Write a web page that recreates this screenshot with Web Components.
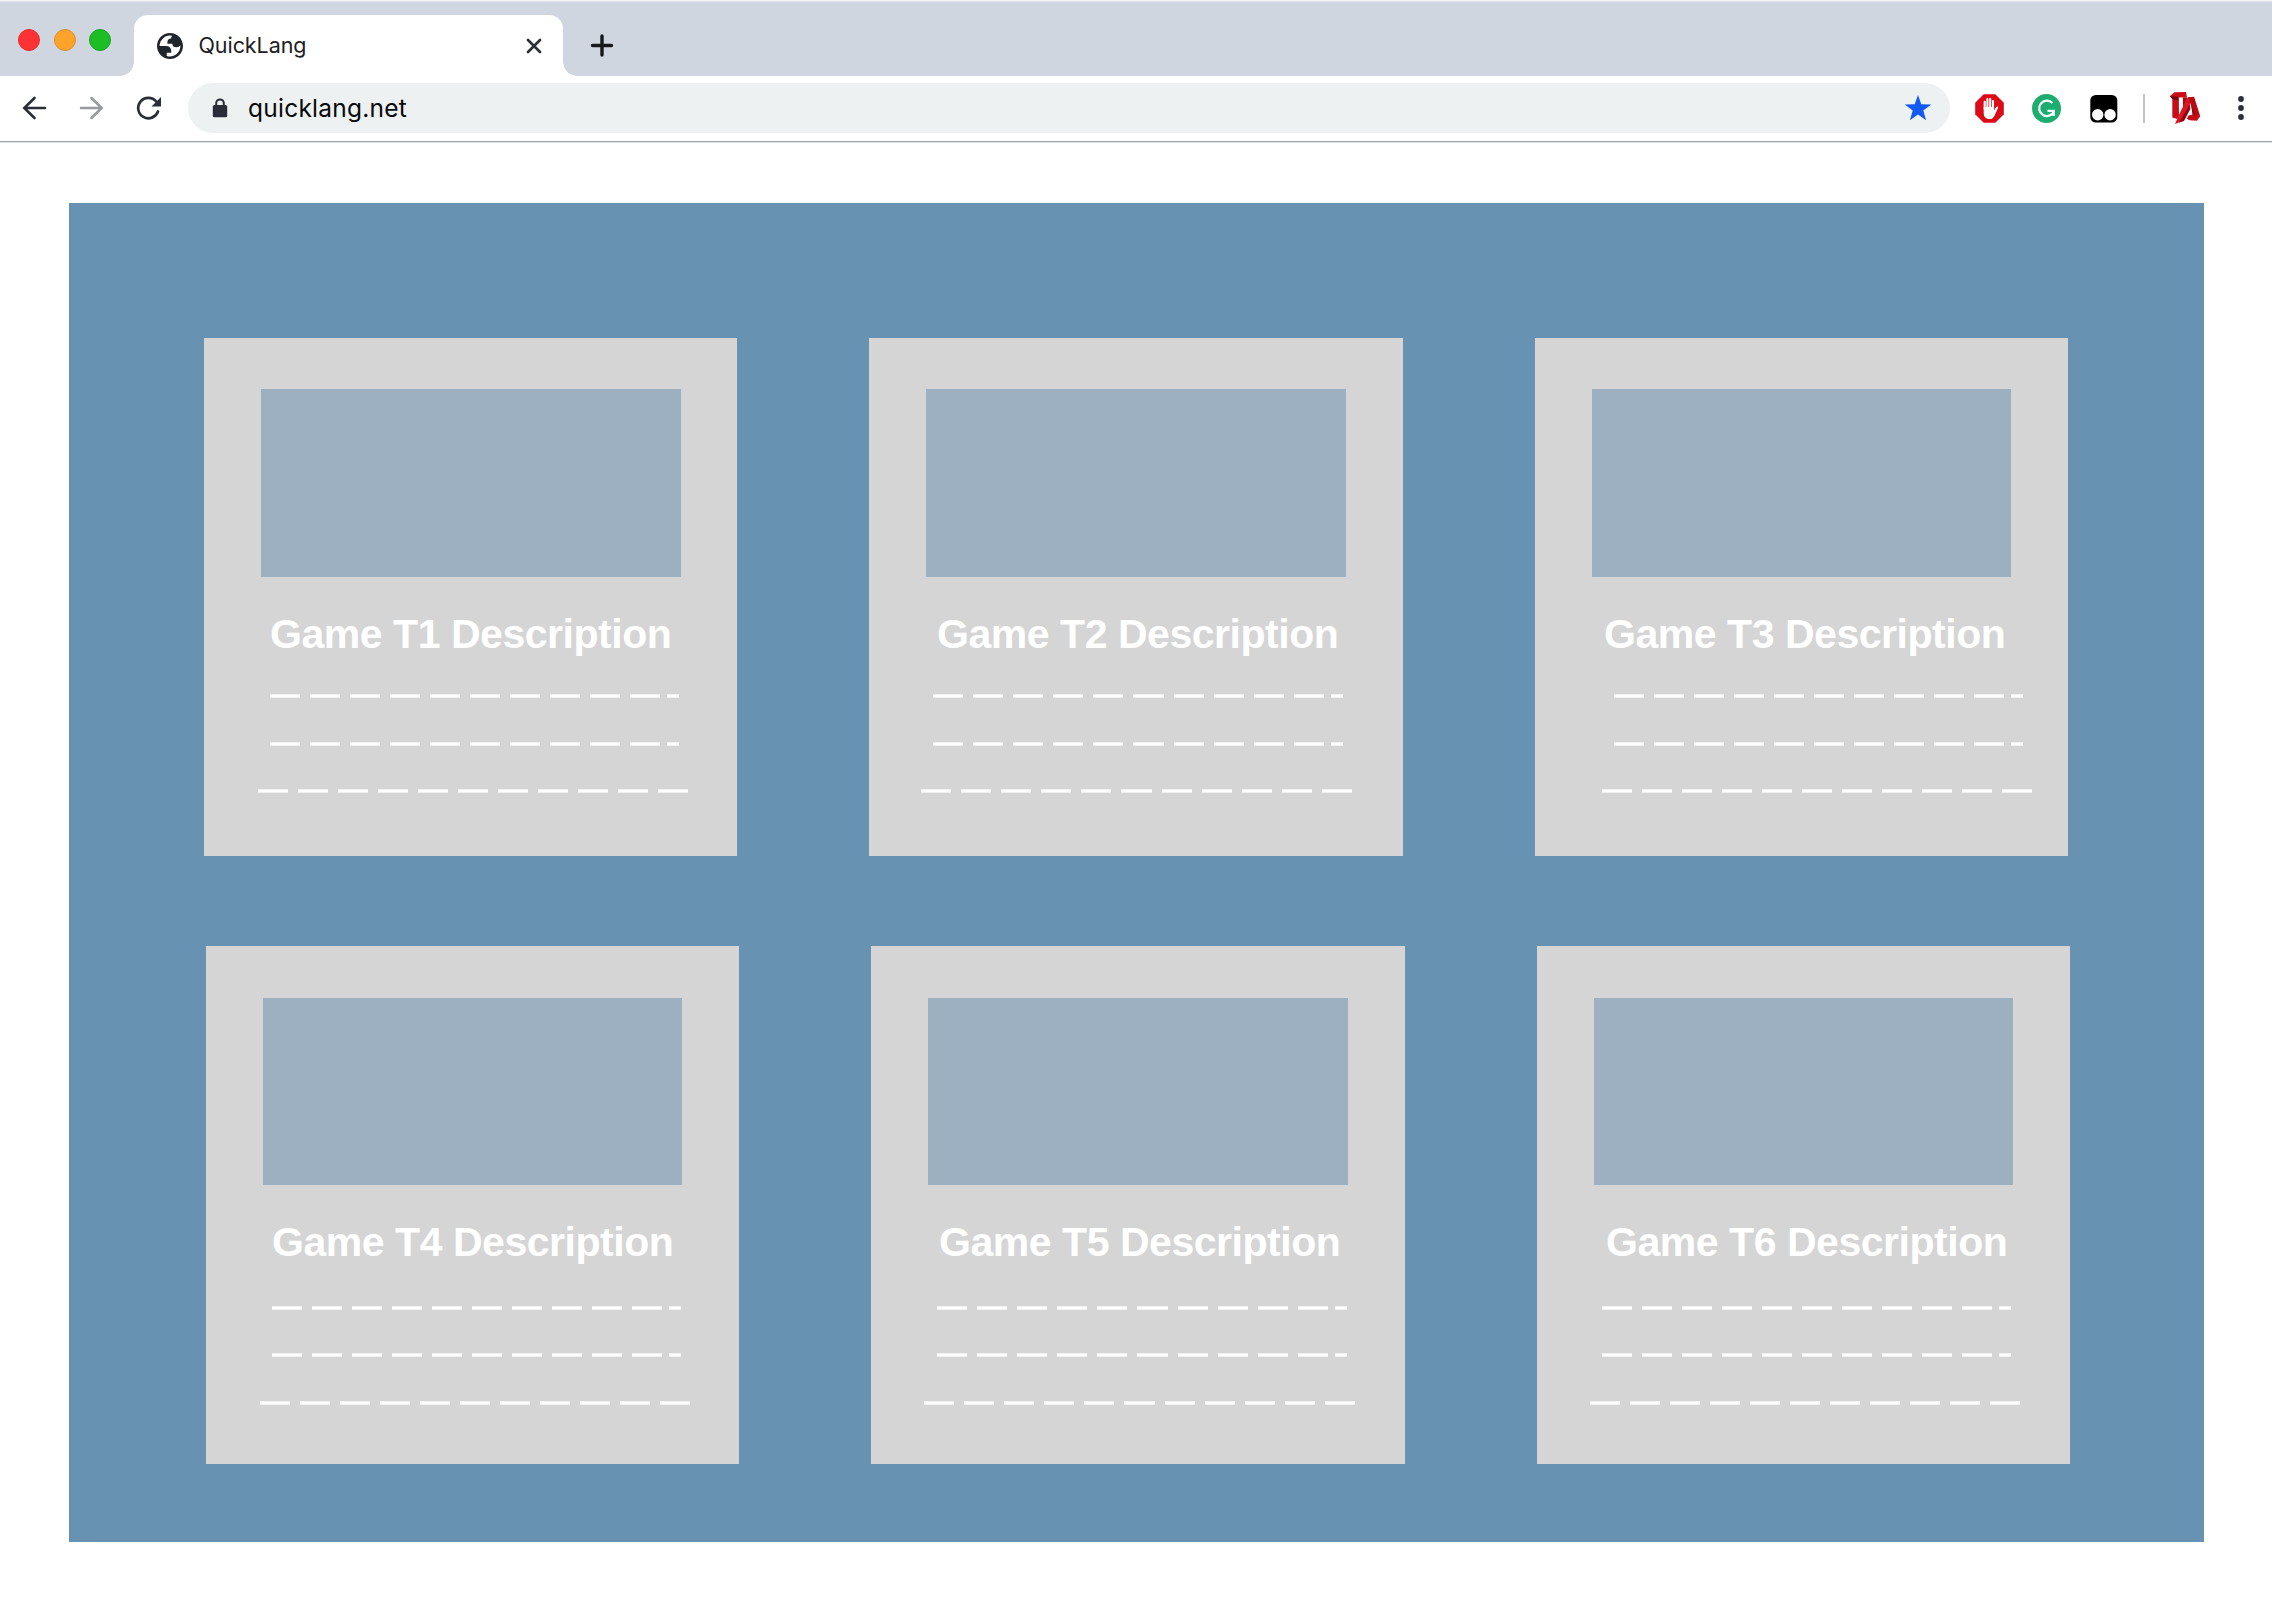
<!DOCTYPE html>
<html lang="en">
<head>
<meta charset="utf-8">
<title>QuickLang</title>
<style>
html,body{margin:0;padding:0;background:#fff}
body{width:2272px;height:1600px;overflow:hidden;font-family:"Liberation Sans",sans-serif}
</style>
</head>
<body>
<browser-window>
  <tab-strip slot="tabs"><browser-tab>QuickLang</browser-tab></tab-strip>
  <nav-bar slot="nav">quicklang.net</nav-bar>
  <game-board>
    <game-card shot="420" head="66" line="66" last="54">Game T1 Description</game-card>
    <game-card wide shot="420" head="68" line="64" last="52">Game T2 Description</game-card>
    <game-card shot="419" head="69" line="79" last="67">Game T3 Description</game-card>
    <game-card low shot="419" head="66" line="66" last="54">Game T4 Description</game-card>
    <game-card low wide shot="420" head="68" line="66" last="53">Game T5 Description</game-card>
    <game-card low shot="419" head="69" line="65" last="53">Game T6 Description</game-card>
  </game-board>
</browser-window>
<script>
const define = (name, render) => customElements.define(name, class extends HTMLElement {
  constructor() { super(); this.attachShadow({ mode: 'open' }); }
  connectedCallback() { this.shadowRoot.innerHTML = render(this); }
});

define('browser-window', () => `
<style>
:host{display:flex;flex-direction:column;width:2272px;height:1600px;background:#fff}
main{padding:59px 0 0 69px}
</style>
<slot name="tabs"></slot><slot name="nav"></slot><main><slot></slot></main>`);

define('tab-strip', () => `
<style>
:host{display:flex;box-sizing:border-box;height:76px;padding-left:18px;background:linear-gradient(#f3f4f6 0,#f3f4f6 1px,#dfe3ea 1px,#dfe3ea 2px,#d0d6e0 2px)}
.lights{display:flex;gap:13.7px;padding-top:28.5px;width:102px}
i{box-sizing:border-box;width:22px;height:22px;border-radius:50%;border:1px solid}
.r{background:#fe3232;border-color:#e52a2b}.y{background:#fea32a;border-color:#dd8e26}.g{background:#1dbd26;border-color:#18a31f}
svg{display:block;margin-top:34px;margin-left:13px}
</style>
<div class="lights"><i class="r"></i><i class="y"></i><i class="g"></i></div>
<slot></slot>
<svg width="24" height="24" viewBox="0 0 24 24"><path d="M12 2.5v19M2.5 12h19" transform="translate(0 -.5)" stroke="#15181c" stroke-width="3.4" stroke-linecap="round"/></svg>`);

define('browser-tab', () => `
<style>
:host{display:flex;height:76px;width:457px}
.foot{flex:none;width:14px;height:14px;align-self:flex-end}
.l{background:radial-gradient(circle at 0 0,transparent 13.5px,#fff 14px)}
.r{background:radial-gradient(circle at 100% 0,transparent 13.5px,#fff 14px)}
.tab{display:flex;align-items:center;box-sizing:border-box;width:429px;height:61px;margin-top:15px;padding:0 21px 0 23px;background:#fff;border-radius:14px 14px 0 0}
.title{flex:1;margin-left:15.5px;padding-bottom:2px;font:21.5px/30px Inter,sans-serif;letter-spacing:-.07px;color:#1d2024}
svg{display:block;flex:none}
</style>
<div class="foot l"></div>
<div class="tab">
<svg width="26" height="26" viewBox="2 2 20 20"><path fill="#20242b" fill-rule="evenodd" d="M12 2C6.480 2 2 6.480 2 12s4.480 10 10 10 10-4.480 10-10S17.520 2 12 2zM4 12h4.400c3.407.022 4.922 1.730 4.543 5.127H9.488v2.470a8.004 8.004 0 0 0 10.498-8.083C19.327 12.504 18.332 13 17 13c-2.137 0-3.206-.916-3.206-2.750h-3.748c-.274-2.728.683-4.092 2.870-4.092 0-.975.327-1.597.811-1.970A8.004 8.004 0 0 0 4 12z"/></svg>
<span class="title"><slot></slot></span>
<svg width="16" height="16" viewBox="0 0 16 16"><path d="M2 2l12 12M14 2L2 14" stroke="#2d3136" stroke-width="2.7" stroke-linecap="round"/></svg>
</div>
<div class="foot r"></div>`);

define('nav-bar', () => `
<style>
:host{display:flex;box-sizing:border-box;height:68px;padding:7px 0 8px 20px;background:linear-gradient(#fff 65px,#a5a6ae 65px,#a5a6ae 66px,#dcdde6 66px,#dcdde6 67px,#fff 67px)}
svg{display:block;flex:none}
.nav{display:flex;align-items:center;gap:25px;width:168px;height:50px}
.omni{display:flex;align-items:center;box-sizing:border-box;width:1762px;height:50px;padding:0 18px 0 24px;border-radius:25px;background:#eef1f2}
.url{flex:1;margin-left:20px;font:24.500px/34px Inter,sans-serif;letter-spacing:.24px;color:#08090a}
.ext{display:flex;align-items:center;height:50px;margin-left:23px}
.ext svg{margin-right:26px}
.sep{width:2px;height:29px;background:#c3c3c5}
.ext .ta{margin:0 0 0 24px}.ext .dots{margin:0 0 0 36px}
</style>
<div class="nav">
<svg width="32" height="32" viewBox="0 0 32 32" fill="none" stroke="#2a2e36" stroke-width="2.600" stroke-linecap="round"><path d="M25 16H5M14.500 6L4.300 16l10.200 10"/></svg>
<svg width="32" height="32" viewBox="0 0 32 32" fill="none" stroke="#96999e" stroke-width="2.500" stroke-linecap="round"><path d="M4 16h20M14.500 6l10.200 10-10.200 10"/></svg>
<svg width="32" height="32" viewBox="0 0 32 32"><path d="M24 19.500A10.200 10.200 0 1 1 22.200 9.500" fill="none" stroke="#2a2e36" stroke-width="2.700" stroke-linecap="round"/><path d="M27 5v9.500h-9.500z" fill="#2a2e36"/></svg>
</div>
<div class="omni">
<svg width="16" height="20" viewBox="0 0 16 20"><path d="M4.200 9V5.200a3.800 3.800 0 0 1 7.600 0V9" fill="none" stroke="#2a2d38" stroke-width="2"/><rect x=".8" y="7" width="14.400" height="12.300" rx="1.500" fill="#2a2d38"/></svg>
<span class="url"><slot></slot></span>
<svg width="28" height="28" viewBox="0 0 28 28"><path fill="#1259f6" d="M14 1l3.300 9.300 9.900.3-7.900 5.900 2.800 9.700-8.100-5.700-8.100 5.700 2.800-9.700-7.900-5.900 9.900-.3z"/></svg>
</div>
<div class="ext">
<svg style="margin-left:2px" width="29" height="29" viewBox="0 0 29 29"><path fill="#db0a16" d="M8.700.2h11.600l8.500 8.500v11.600l-8.500 8.500H8.700L.2 20.300V8.700z"/><path fill="none" stroke="#fff" stroke-width="2.100" stroke-linecap="round" d="M9.700 15V7.800M12.400 14V5M15.200 14V5M18 15V7"/><path fill="#fff" d="M8.700 13h10.400v3.500l2-3.300c.9-1.100 2.400-.6 1.900.7l-3.400 7.500c-1 2.400-2.700 3.700-5.200 3.700-3.700 0-5.700-2.300-5.700-6z"/></svg>
<svg width="29" height="29" style="margin-left:2px" viewBox="0 0 29 29"><circle cx="14.500" cy="14.500" r="14.500" fill="#1ead70"/><path fill="none" stroke="#fff" stroke-width="2.300" d="M20.400 9A7.700 7.700 0 1 0 22 17.400M15.500 16.900h6.200v5"/></svg>
<svg width="29" height="29" style="margin-left:2px;margin-right:25px" viewBox="0 0 29 29"><rect x="1.300" y="1" width="27" height="27.500" rx="5.500" fill="#000"/><circle cx="8.700" cy="20.800" r="5.700" fill="#fff"/><circle cx="21.100" cy="20.800" r="5.700" fill="#fff"/></svg>
<span class="sep"></span>
<svg class="ta" width="32" height="34" viewBox="0 0 32 34"><path fill="#c70d18" d="M.8 5.200L5.500 1.200 17 1l1 5.500H9.800L10 24.500 8.500 28 3.300 26.500V7.500z"/><path fill="#6e080c" d="M.8 5.200l8 .6.800 3.700-6.300-1.600z"/><path fill="#a20a12" d="M13.800 6.500h4.400v5.300l-4 7z"/><path fill="#dc1521" d="M18 7l3.500 1-.8 7.500-8 15-6.700 2.500 2.500-6z"/><path fill="#8a0810" d="M20.700 13.500l.6 4.500-6.300 12-5 1.500z"/><path fill="#b50c15" d="M18.300 6.300l6.800-.6 6.100 19.600-6-1.800-5-14z"/><path fill="#8f0810" d="M22 13.500l4 10 5.200 1.800-1.500 1.800-6.200-3z"/><path fill="#c4101b" d="M19.500 24.500l4.500-1 7 1.800-3 4.500-7.500-.6-2.700-1.500z"/></svg>
<svg class="dots" width="8" height="26" viewBox="0 0 8 26"><g fill="#2d3037"><circle cx="4" cy="4" r="2.900"/><circle cx="4" cy="13" r="2.900"/><circle cx="4" cy="22" r="2.900"/></g></svg>
</div>`);

define('game-board', () => `
<style>
:host{display:grid;box-sizing:border-box;width:2135px;height:1339px;padding:135px 0 0 135px;grid-template-columns:533px 534px 533px;grid-template-rows:518px 518px;column-gap:132px;row-gap:90px;background:#6792b1}
</style><slot></slot>`);

define('game-card', el => {
  const low = el.hasAttribute('low'), wide = el.hasAttribute('wide') ? ' wide' : '';
  const gaps = low ? [39, 43, 44] : [35, 44, 43];
  const at = n => el.getAttribute(n);
  return `
<style>
:host{display:flex;flex-direction:column;box-sizing:border-box;height:518px;padding-top:${low ? 52 : 51}px;background:#d5d5d5}
:host([low]){margin-left:2px;margin-right:-2px}
.shot{width:${at('shot')}px;height:${low ? 187 : 188}px;margin-left:57px;background:#9cb0c1}
h2{margin:32px 0 0 ${at('head')}px;font:bold 41px/50px "Liberation Sans",sans-serif;letter-spacing:-.46px;color:#fff;white-space:nowrap}
</style>
<div class="shot"></div>
<h2><slot></slot></h2>
<dash-rule tail${wide} style="margin:${gaps[0]}px 0 0 ${at('line')}px"></dash-rule>
<dash-rule tail${wide} style="margin:${gaps[1]}px 0 0 ${at('line')}px"></dash-rule>
<dash-rule${wide} style="margin:${gaps[2]}px 0 0 ${at('last')}px"></dash-rule>`;
});

define('dash-rule', el => {
  const tail = el.hasAttribute('tail'), extra = el.hasAttribute('wide') ? 1 : 0;
  let out = '';
  for (let i = 0; i < (tail ? 10 : 11); i++)
    out += `<rect x="${i * 40 + (i > 5 ? extra : 0)}" y=".35" width="${30 + (i === 5 ? extra : 0)}" height="3.3"/>`;
  if (tail) out += `<rect x="${397 + extra}" y=".35" width="12" height="3.3"/>`;
  return `<style>:host{display:block;height:4px}svg{display:block}</style><svg width="431" height="4" fill="#fff">${out}</svg>`;
});
</script>
</body>
</html>
